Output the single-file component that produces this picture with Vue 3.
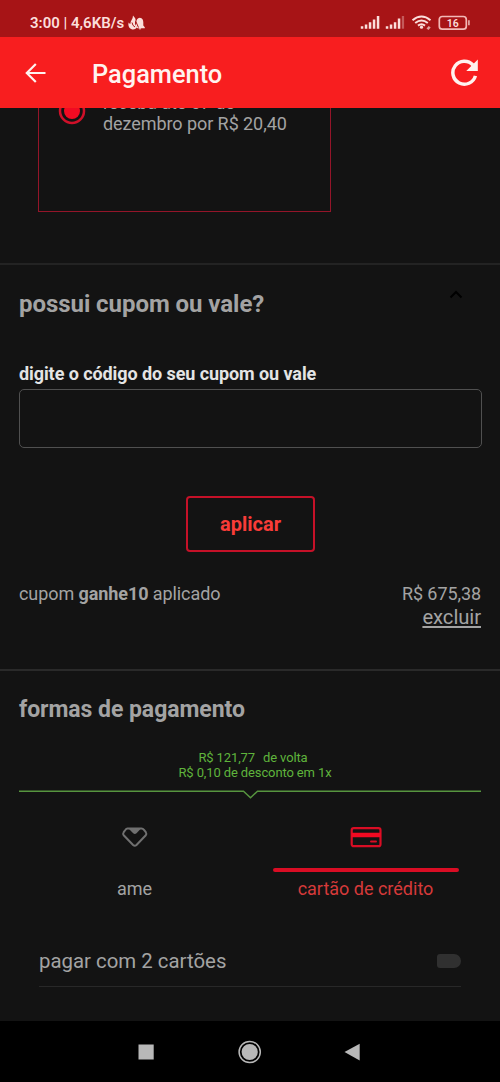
<script setup>
const paymentTabs = [
  { id: 'ame', label: 'ame' },
  { id: 'card', label: 'cartão de crédito' },
]
const selected = 'card'
</script>

<template>
  <div class="phone">
    <div class="status">
      <span class="clock">3:00 | 4,6KB/s</span>
      <svg class="alerts" width="17" height="16" viewBox="0 0 17 16">
        <path d="M5 0.5C6 2 8 3 7.500 5.500C7 7 6.600 8 7.500 10L9 12.500C7.500 14.300 5.500 14.700 3.700 14.200C1 13.300 -0.300 10.500 0.700 7.500C1.300 8.700 2 9 2.600 8.800C1.800 6.500 5 4.500 5 0.500Z" />
        <path d="M11.800 2.700C14.500 3.100 15.300 5 15.300 7.500V10.500L16.800 12.300V13.200H9.500L7.800 11L8.200 7.500C8.300 5 9.400 3.100 11.800 2.700ZM10.600 13.500H13.400Q12 15.500 10.600 13.500Z" />
        <path class="slash" d="M4 7.500Q4.500 11 7 12M7.800 6.500L10.500 12.500" />
      </svg>
      <svg class="radio-icons" width="112" height="18" viewBox="0 0 112 18">
        <path d="M0.800 12.300h2.500v2.400h-2.500zM4.800 10.500h2.500v4.200h-2.500zM8.800 8.300h2.500v6.400h-2.500zM12.800 5.500h2.500v9.200h-2.500zM16.800 2h2.500v12.700h-2.500z" />
        <path d="M25.800 12.300h2.500v2.400h-2.500zM29.800 10.500h2.500v4.200h-2.500zM33.800 8.300h2.500v6.400h-2.500zM37.800 4.500h2.500v10.200h-2.500z" />
        <path class="dim" d="M41.800 2h2.300v12.700h-2.300z" />
        <g class="waves">
          <path d="M52.500 6.200Q61.500 -1.200 70.500 6.200" />
          <path d="M55.200 9Q61.500 4 67.800 9" />
          <path d="M58 11.600Q61.500 8.800 65 11.600" />
        </g>
        <circle cx="61.500" cy="13.200" r="1.600" />
        <path class="tiny" d="M66.500 14.500l2.200-2.500l2 1.500l-2.200 2.500z" />
        <rect class="battery" x="79.300" y="2.500" width="27" height="12.700" rx="3" />
        <path class="tiny" d="M108 6.300h1.800v5h-1.800z" />
        <text x="92.800" y="12.800" text-anchor="middle">16</text>
      </svg>
    </div>

    <header class="appbar">
      <svg class="back" width="22" height="20" viewBox="0 0 22 20">
        <path d="M20.500 10H2M10.800 1L1.800 10L10.800 19" />
      </svg>
      <h1>Pagamento</h1>
      <svg class="refresh" width="29" height="29" viewBox="0 0 30 30">
        <path class="arc" d="M23.700 7.200A11.900 11.900 0 1 0 26.300 18.500" />
        <path class="head" d="M28.800 1.500V13.500H16.800Z" />
      </svg>
    </header>

    <main>
      <section class="shipping">
        <div class="option">
          <svg class="radio" width="28" height="28" viewBox="0 0 28 28">
            <circle class="ring" cx="14" cy="14" r="12" />
            <circle class="dot" cx="14" cy="14" r="8" />
          </svg>
          <p>receba até 07 de<br />dezembro por R$ 20,40</p>
        </div>
      </section>

      <section class="coupon">
        <div class="heading">
          <h2 class="h-coupon">possui cupom ou vale?</h2>
          <svg class="chevron" width="14" height="9" viewBox="0 0 14 9">
            <path d="M1.500 7.500L7 2L12.500 7.500" />
          </svg>
        </div>
        <label for="code">digite o código do seu cupom ou vale</label>
        <input id="code" type="text" />
        <button class="apply"><span>aplicar</span></button>
        <div class="applied">
          <span class="applied-name">cupom <b>ganhe10</b> aplicado</span>
          <div class="amount">
            <span class="value">R$ 675,38</span>
            <a>excluir</a>
          </div>
        </div>
      </section>

      <section class="payment">
        <h2 class="h-pay">formas de pagamento</h2>
        <div class="cashback">
          <span class="c1">R$ 121,77<span class="back-word">de volta</span></span>
          <span class="c2">R$ 0,10 de desconto em 1x</span>
        </div>
        <svg class="notch" width="462" height="10" viewBox="0 0 462 10">
          <path d="M0 1.200H224.500L231.500 7.700L238.500 1.200H462" />
        </svg>
        <div class="tabs">
          <div v-for="tab in paymentTabs" :key="tab.id" class="tab" :class="{ active: tab.id === selected }">
            <svg v-if="tab.id === 'ame'" width="32" height="24" viewBox="0 0 32 24">
              <path class="heart" d="M8.500 3.500H22.500Q24 3.500 25 4.800L26.800 7.200Q28 9 26.800 10.300L17.500 20Q15.800 21.500 14.100 20L4.700 10.300Q3.500 9 4.700 7.200L6.500 4.800Q7.300 3.500 8.500 3.500Z" />
              <path class="tip" d="M9.500 3.500H22L17.500 8.300Q15.800 9.800 14.200 8.300Z" />
            </svg>
            <svg v-else width="32" height="24" viewBox="0 0 32 24">
              <rect class="card" x="1.700" y="3.200" width="28.800" height="18" rx="2" />
              <path class="stripe" d="M1.500 10H30.500" />
              <path class="chip" d="M21 16.500H26" />
            </svg>
            <i class="bar"></i>
            <span>{{ tab.label }}</span>
          </div>
        </div>
        <div class="two-cards">
          <span>pagar com 2 cartões</span>
          <i class="switch"></i>
        </div>
      </section>
    </main>

    <nav>
      <svg width="500" height="61" viewBox="0 0 500 61">
        <rect x="138.500" y="23.500" width="15.200" height="15" />
        <circle class="home-ring" cx="249.700" cy="31" r="10.600" />
        <circle cx="249.700" cy="31" r="8.100" />
        <path d="M344.500 31L359.700 22.700V39.500Z" />
      </svg>
    </nav>
  </div>
</template>

<style>
body {
  background: #131313;
}
</style>

<style scoped>
.phone {
  width: 500px;
  height: 1082px;
  display: flex;
  flex-direction: column;
  overflow: hidden;
  background: #131313;
  color: #a3a3a3;
  font-family: Roboto, "Liberation Sans", sans-serif;
}
* {
  box-sizing: border-box;
}
svg {
  display: block;
  flex: none;
}
h1, h2, p {
  margin: 0;
}
.status {
  height: 37px;
  flex: none;
  display: flex;
  align-items: flex-start;
  padding: 14px 28px 0 30px;
  background: #a71416;
  color: #fbdedb;
  fill: #fbdedb;
}
.clock {
  font-size: 15px;
  line-height: 19px;
  font-weight: 600;
  white-space: nowrap;
  width: 98px;
}
.alerts .slash {
  fill: none;
  stroke: #a71416;
  stroke-width: 1;
}
.alerts {
  margin-top: 1px;
}
.radio-icons {
  margin-left: auto;
}
.radio-icons .dim {
  opacity: 0.35;
}
.waves {
  fill: none;
  stroke: #fbdedb;
  stroke-width: 2;
}
.tiny {
  opacity: 0.7;
}
.battery {
  fill: none;
  stroke: #f3b9b6;
  stroke-width: 1.700;
}
.radio-icons text {
  font-size: 10.500px;
  font-weight: 600;
}
.appbar {
  height: 71px;
  flex: none;
  display: flex;
  align-items: center;
  padding: 0 21px 0 25px;
  background: #f81e1f;
  color: #fff3ef;
}
.back {
  fill: none;
  stroke: #fff3ef;
  stroke-width: 2.200;
}
h1 {
  margin: 3px 0 0 45px;
  font-size: 25.400px;
  line-height: 30px;
  font-weight: 500;
}
.refresh {
  margin-left: auto;
}
.refresh .arc {
  fill: none;
  stroke: #fff3ef;
  stroke-width: 3.600;
}
.refresh .head {
  fill: #fff3ef;
}
main {
  height: 913px;
  flex: none;
  overflow: hidden;
}
.shipping {
  height: 157px;
  padding-left: 38px;
  border-bottom: 2px solid #232323;
}
.option {
  width: 293px;
  height: 104px;
  display: flex;
  border: 1px solid #941529;
  border-top: 0;
}
.radio {
  margin: -11px 0 0 19px;
}
.radio .ring {
  fill: none;
  stroke: #cf1029;
  stroke-width: 2.500;
}
.radio .dot {
  fill: #f20a22;
}
.option p {
  margin: -16px 0 0 17px;
  font-size: 18px;
  line-height: 21px;
  letter-spacing: -0.070px;
  white-space: nowrap;
}
.coupon {
  height: 406px;
  padding: 0 19px;
  border-bottom: 2px solid #2a2a2a;
}
.heading {
  display: flex;
  justify-content: space-between;
  padding: 24px 18px 0 0;
}
h2 {
  font-size: 24px;
  line-height: 30px;
  font-weight: 700;
  white-space: nowrap;
}
.h-coupon {
  letter-spacing: -0.050px;
}
.chevron {
  fill: none;
  stroke: #000;
  stroke-width: 2;
  margin-top: 1px;
}
label {
  display: block;
  margin-top: 43px;
  font-size: 18px;
  line-height: 24px;
  font-weight: 700;
  letter-spacing: -0.080px;
  color: #e4e4e4;
  white-space: nowrap;
}
input {
  display: block;
  width: 463px;
  height: 59px;
  margin-top: 3px;
  border: 1px solid #505050;
  border-radius: 5px;
  background: transparent;
}
.apply {
  display: block;
  width: 129px;
  height: 56px;
  margin: 48px 0 0 167px;
  padding: 0;
  border: 2px solid #c51128;
  border-radius: 4px;
  background: transparent;
  color: #f93c38;
  font: 700 20px/24px Roboto, sans-serif;
}
.applied {
  display: flex;
  justify-content: space-between;
  margin-top: 30px;
  font-size: 18px;
  line-height: 24px;
  letter-spacing: -0.080px;
}
.amount {
  display: flex;
  flex-direction: column;
  align-items: flex-end;
}
.amount a {
  font-size: 20.300px;
  line-height: 22px;
  text-decoration: underline;
}
.payment {
  padding: 0 19px;
}
.h-pay {
  padding-top: 24px;
  font-size: 23px;
  letter-spacing: -0.050px;
}
.cashback {
  display: flex;
  flex-direction: column;
  align-items: center;
  margin-top: 25px;
  padding-left: 10px;
  font-size: 13px;
  line-height: 15px;
  letter-spacing: -0.120px;
  color: #5fb43c;
}
.cashback .c1 {
  padding-right: 4px;
}
.back-word {
  margin-left: 8px;
}
.notch {
  margin-top: 10px;
  fill: none;
  stroke: #57953f;
  stroke-width: 1.500;
}
.tabs {
  display: flex;
  margin-top: 25px;
}
.tab {
  width: 231px;
  display: flex;
  flex-direction: column;
  align-items: center;
  font-size: 18px;
  line-height: 24px;
}
.bar {
  width: 186px;
  height: 4px;
  margin: 19px 0 5px;
  border-radius: 2px;
}
.active {
  color: #d63a3a;
}
.active .bar {
  background: #d90d24;
}
.heart {
  fill: none;
  stroke: #707070;
  stroke-width: 2;
}
.tip {
  fill: #707070;
}
.card {
  fill: none;
  stroke: #d90d24;
  stroke-width: 2.200;
}
.stripe {
  stroke: #f20a22;
  stroke-width: 4.500;
}
.chip {
  stroke: #d90d24;
  stroke-width: 2;
  stroke-linecap: round;
}
.two-cards {
  display: flex;
  justify-content: space-between;
  align-items: center;
  height: 52px;
  margin: 34px 20px 0;
  border-bottom: 1px solid #282828;
  font-size: 20.400px;
}
.switch {
  width: 24px;
  height: 14px;
  border-radius: 3px 7px 7px 3px;
  background: #303030;
}
nav {
  height: 61px;
  flex: none;
  background: #000;
  fill: #b8b8b8;
}
.home-ring {
  fill: none;
  stroke: #b8b8b8;
  stroke-width: 1.500;
}
</style>
